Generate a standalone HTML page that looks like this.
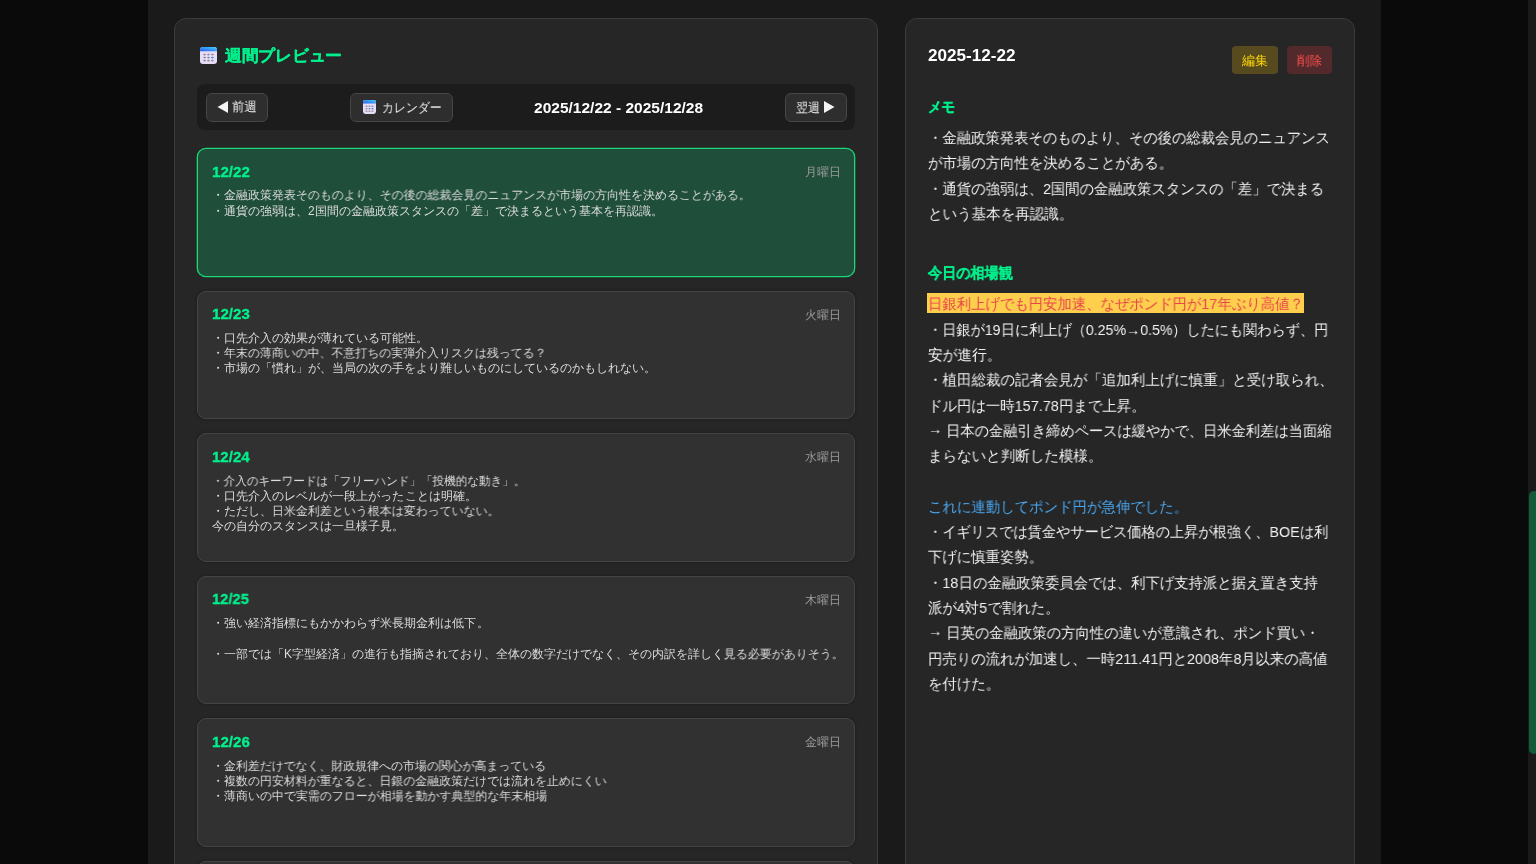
<!DOCTYPE html>
<html lang="ja">
<head>
<meta charset="utf-8">
<style>
*{box-sizing:border-box;margin:0;padding:0}
html,body{width:1536px;height:864px;overflow:hidden;background:#0a0a0a;font-family:"Liberation Sans",sans-serif;color:#e0e0e0}
.ab{position:absolute}
.l{position:absolute;white-space:nowrap;transform-origin:0 50%;will-change:transform}
.wrap{left:148px;top:0;width:1233px;height:864px;background:#1a1a1a}
.track{left:1528px;top:0;width:8px;height:864px;background:#1a1a1a}
.thumb{left:1528.5px;top:491px;width:10px;height:263px;background:#135c3b;border-radius:5px}
.panel{top:18px;height:900px;background:#262626;border:1px solid #3b3b3b;border-radius:12px}
.nav{left:197px;top:84px;width:658px;height:46.3px;background:#1c1c1c;border-radius:8px}
.btn{top:93px;height:29px;background:#2e2e2e;border:1px solid #464646;border-radius:6px}
.card{left:197px;width:658px;height:128.6px;background:#313131;border:1px solid #454545;border-radius:9px;box-shadow:0 0 3px rgba(0,0,0,.35)}
.card.on{background:#1f4e3a;border-color:#1bd878;box-shadow:0 0 0 0.3px #1bd878}
.sbtn{top:46px;height:28px;border-radius:4px}
</style>
</head>
<body>
<div class="ab wrap"></div>
<div class="ab track"></div>
<div class="ab thumb"></div>
<div class="ab panel" style="left:174px;width:704px"></div>
<div class="ab panel" style="left:905px;width:450px"></div>
<div class="ab nav"></div>
<div class="ab btn" style="left:206px;width:62px"></div>
<div class="ab btn" style="left:350px;width:103px"></div>
<div class="ab btn" style="left:785px;width:62px"></div>

<svg class="ab" style="left:200px;top:47px" width="17" height="17" viewBox="0 0 17 17" preserveAspectRatio="none">
<defs><linearGradient id="g3" x1="0" y1="1" x2="1" y2="0"><stop offset="0" stop-color="#2a5cf0"/><stop offset="1" stop-color="#3fd0fa"/></linearGradient></defs>
<rect x="0" y="0" width="17" height="17" rx="3" fill="#e6dcf6"/>
<path d="M3 0h11a3 3 0 0 1 3 3v1.2H0V3a3 3 0 0 1 3-3z" fill="url(#g3)"/>
<g fill="#8a8494"><ellipse cx="4.6" cy="7.6" rx="1.35" ry="0.8"/><ellipse cx="8.5" cy="7.6" rx="1.35" ry="0.8"/><ellipse cx="12.4" cy="7.6" rx="1.35" ry="0.8"/><ellipse cx="4.6" cy="10.6" rx="1.35" ry="0.8"/><ellipse cx="8.5" cy="10.6" rx="1.35" ry="0.8"/><ellipse cx="4.6" cy="13.6" rx="1.35" ry="0.8"/><ellipse cx="8.5" cy="13.6" rx="1.35" ry="0.8"/><ellipse cx="12.4" cy="13.6" rx="1.35" ry="0.8"/></g>
<ellipse cx="12.4" cy="10.6" rx="1.35" ry="0.8" fill="#1f8af2"/>
</svg>
<svg class="ab" style="left:363px;top:100px" width="13" height="14" viewBox="0 0 17 17" preserveAspectRatio="none">
<defs><linearGradient id="g4" x1="0" y1="1" x2="1" y2="0"><stop offset="0" stop-color="#2a5cf0"/><stop offset="1" stop-color="#3fd0fa"/></linearGradient></defs>
<rect x="0" y="0" width="17" height="17" rx="3" fill="#e6dcf6"/>
<path d="M3 0h11a3 3 0 0 1 3 3v1.2H0V3a3 3 0 0 1 3-3z" fill="url(#g4)"/>
<g fill="#8a8494"><ellipse cx="4.6" cy="7.6" rx="1.35" ry="0.8"/><ellipse cx="8.5" cy="7.6" rx="1.35" ry="0.8"/><ellipse cx="12.4" cy="7.6" rx="1.35" ry="0.8"/><ellipse cx="4.6" cy="10.6" rx="1.35" ry="0.8"/><ellipse cx="8.5" cy="10.6" rx="1.35" ry="0.8"/><ellipse cx="4.6" cy="13.6" rx="1.35" ry="0.8"/><ellipse cx="8.5" cy="13.6" rx="1.35" ry="0.8"/><ellipse cx="12.4" cy="13.6" rx="1.35" ry="0.8"/></g>
<ellipse cx="12.4" cy="10.6" rx="1.35" ry="0.8" fill="#1f8af2"/>
</svg>
<div class="ab card on" style="top:148.0px"></div>
<div class="ab card" style="top:290.6px"></div>
<div class="ab card" style="top:433.2px"></div>
<div class="ab card" style="top:575.8px"></div>
<div class="ab card" style="top:718.4px"></div>
<div class="ab card" style="top:861.0px"></div>
<div class="ab sbtn" style="left:1232px;width:46px;background:#564a1e"></div>
<div class="ab sbtn" style="left:1287px;width:45px;background:#532a2b"></div>
<div class="ab" style="left:927px;top:293px;width:377px;height:20px;background:#fdcf4c"></div>
<svg class="ab" style="left:216px;top:100px" width="13" height="14"><path d="M1.5 7 L12 1 L12 13 Z" fill="#f4f4f4"/></svg>
<svg class="ab" style="left:823px;top:100px" width="13" height="14"><path d="M11.5 7 L1 1 L1 13 Z" fill="#f4f4f4"/></svg>
<div class="l" id="m0" style="top:128.00px;font-size:15px;line-height:20px;color:#f0f0f0;left:928px;transform:scaleX(0.9567);">・金融政策発表そのものより、その後の総裁会見のニュアンス</div>
<div class="l" id="m1" style="top:153.30px;font-size:15px;line-height:20px;color:#f0f0f0;left:928px;transform:scaleX(0.9608);">が市場の方向性を決めることがある。</div>
<div class="l" id="m2" style="top:178.60px;font-size:15px;line-height:20px;color:#f0f0f0;left:928px;transform:scaleX(0.9591);">・通貨の強弱は、2国間の金融政策スタンスの「差」で決まる</div>
<div class="l" id="m3" style="top:203.90px;font-size:15px;line-height:20px;color:#f0f0f0;left:928px;transform:scaleX(0.9686);">という基本を再認識。</div>
<div class="l" id="p1" style="top:319.60px;font-size:15px;line-height:20px;color:#f0f0f0;left:928px;transform:scaleX(0.9464);">・日銀が19日に利上げ（0.25%→0.5%）したにも関わらず、円</div>
<div class="l" id="p2" style="top:344.90px;font-size:15px;line-height:20px;color:#f0f0f0;left:928px;transform:scaleX(0.9785);">安が進行。</div>
<div class="l" id="p3" style="top:370.20px;font-size:15px;line-height:20px;color:#f0f0f0;left:928px;transform:scaleX(0.9659);">・植田総裁の記者会見が「追加利上げに慎重」と受け取られ、</div>
<div class="l" id="p4" style="top:395.50px;font-size:15px;line-height:20px;color:#f0f0f0;left:928px;transform:scaleX(0.9630);">ドル円は一時157.78円まで上昇。</div>
<div class="l" id="p5" style="top:420.80px;font-size:15px;line-height:20px;color:#f0f0f0;left:928px;transform:scaleX(0.9517);"><span style="position:relative;top:-2px">→</span> 日本の金融引き締めペースは緩やかで、日米金利差は当面縮</div>
<div class="l" id="p6" style="top:446.10px;font-size:15px;line-height:20px;color:#f0f0f0;left:928px;transform:scaleX(0.9694);">まらないと判断した模様。</div>
<div class="l" id="p8" style="top:496.70px;font-size:15px;line-height:20px;color:#4aa6ee;left:928px;transform:scaleX(0.9631);">これに連動してポンド円が急伸でした。</div>
<div class="l" id="p9" style="top:522.00px;font-size:15px;line-height:20px;color:#f0f0f0;left:928px;transform:scaleX(0.9487);">・イギリスでは賃金やサービス価格の上昇が根強く、BOEは利</div>
<div class="l" id="p10" style="top:547.30px;font-size:15px;line-height:20px;color:#f0f0f0;left:928px;transform:scaleX(0.9591);">下げに慎重姿勢。</div>
<div class="l" id="p11" style="top:572.60px;font-size:15px;line-height:20px;color:#f0f0f0;left:928px;transform:scaleX(0.9580);">・18日の金融政策委員会では、利下げ支持派と据え置き支持</div>
<div class="l" id="p12" style="top:597.90px;font-size:15px;line-height:20px;color:#f0f0f0;left:928px;transform:scaleX(0.9598);">派が4対5で割れた。</div>
<div class="l" id="p13" style="top:623.20px;font-size:15px;line-height:20px;color:#f0f0f0;left:928px;transform:scaleX(0.9573);"><span style="position:relative;top:-2px">→</span> 日英の金融政策の方向性の違いが意識され、ポンド買い・</div>
<div class="l" id="p14" style="top:648.50px;font-size:15px;line-height:20px;color:#f0f0f0;left:928px;transform:scaleX(0.9601);">円売りの流れが加速し、一時211.41円と2008年8月以来の高値</div>
<div class="l" id="p15" style="top:673.80px;font-size:15px;line-height:20px;color:#f0f0f0;left:928px;transform:scaleX(0.9615);">を付けた。</div>
<div class="l" id="hm" style="top:97.00px;font-size:15px;line-height:20px;color:#00f08c;font-weight:bold;-webkit-text-stroke:0.25px #00f08c;left:928px;transform:scaleX(0.9000);">メモ</div>
<div class="l" id="hs" style="top:262.50px;font-size:15px;line-height:20px;color:#00f08c;font-weight:bold;-webkit-text-stroke:0.25px #00f08c;left:928px;transform:scaleX(0.9423);">今日の相場観</div>
<div class="l" id="rtitle" style="top:45.80px;font-size:17px;line-height:20px;color:#ffffff;font-weight:bold;left:928px;transform:scaleX(1.0069);">2025-12-22</div>
<div class="l" id="hl" style="top:293.50px;font-size:15px;line-height:20px;color:#e8444c;left:928px;transform:scaleX(0.9588);">日銀利上げでも円安加速、なぜポンド円が17年ぶり高値？</div>
<div class="l" id="title" style="top:46.00px;font-size:16px;line-height:20px;color:#00f08c;font-weight:bold;-webkit-text-stroke:0.25px #00f08c;left:225px;transform:scaleX(1.0450);">週間プレビュー</div>
<div class="l" id="range" style="top:97.70px;font-size:15px;line-height:20px;color:#ffffff;font-weight:bold;left:534px;transform:scaleX(1.0344);">2025/12/22 - 2025/12/28</div>
<div class="l" id="bprev" style="top:97.30px;font-size:13px;line-height:20px;color:#f0f0f0;left:232px;transform:scaleX(0.9480);">前週</div>
<div class="l" id="bcal" style="top:97.50px;font-size:13px;line-height:20px;color:#f0f0f0;left:381.5px;transform:scaleX(0.9178);">カレンダー</div>
<div class="l" id="bnext" style="top:97.50px;font-size:13px;line-height:20px;color:#f0f0f0;left:796px;transform:scaleX(0.9200);">翌週</div>
<div class="l" id="bedit" style="top:51.00px;font-size:13px;line-height:20px;color:#ffd60a;left:1241.5px;">編集</div>
<div class="l" id="bdel" style="top:51.00px;font-size:13px;line-height:20px;color:#ff4f4f;left:1296.5px;transform:scaleX(0.9647);">削除</div>
<div class="l" id="d0" style="top:161.50px;font-size:15px;line-height:20px;color:#00f08c;font-weight:bold;-webkit-text-stroke:0.3px #00f08c;left:212px;transform:scaleX(1.0081);">12/22</div>
<div class="l" id="w0" style="top:161.90px;font-size:12px;line-height:20px;color:#9a9a9a;right:695.0px;">月曜日</div>
<div class="l" id="c0_0" style="top:185.40px;font-size:12px;line-height:20px;color:#dcdcdc;left:212px;transform:scaleX(0.9976);">・金融政策発表そのものより、その後の総裁会見のニュアンスが市場の方向性を決めることがある。</div>
<div class="l" id="c0_1" style="top:200.60px;font-size:12px;line-height:20px;color:#dcdcdc;left:212px;transform:scaleX(0.9993);">・通貨の強弱は、2国間の金融政策スタンスの「差」で決まるという基本を再認識。</div>
<div class="l" id="d1" style="top:304.10px;font-size:15px;line-height:20px;color:#00f08c;font-weight:bold;-webkit-text-stroke:0.3px #00f08c;left:212px;transform:scaleX(1.0081);">12/23</div>
<div class="l" id="w1" style="top:304.50px;font-size:12px;line-height:20px;color:#9a9a9a;right:695.0px;">火曜日</div>
<div class="l" id="c1_0" style="top:328.00px;font-size:12px;line-height:20px;color:#dcdcdc;left:212px;">・口先介入の効果が薄れている可能性。</div>
<div class="l" id="c1_1" style="top:343.20px;font-size:12px;line-height:20px;color:#dcdcdc;left:212px;transform:scaleX(0.9955);">・年末の薄商いの中、不意打ちの実弾介入リスクは残ってる？</div>
<div class="l" id="c1_2" style="top:358.40px;font-size:12px;line-height:20px;color:#dcdcdc;left:212px;transform:scaleX(0.9993);">・市場の「慣れ」が、当局の次の手をより難しいものにしているのかもしれない。</div>
<div class="l" id="d2" style="top:446.70px;font-size:15px;line-height:20px;color:#00f08c;font-weight:bold;-webkit-text-stroke:0.3px #00f08c;left:212px;transform:scaleX(1.0026);">12/24</div>
<div class="l" id="w2" style="top:447.10px;font-size:12px;line-height:20px;color:#9a9a9a;right:695.0px;">水曜日</div>
<div class="l" id="c2_0" style="top:470.60px;font-size:12px;line-height:20px;color:#dcdcdc;left:212px;transform:scaleX(0.9671);">・介入のキーワードは「フリーハンド」「投機的な動き」。</div>
<div class="l" id="c2_1" style="top:485.80px;font-size:12px;line-height:20px;color:#dcdcdc;left:212px;transform:scaleX(1.0027);">・口先介入のレベルが一段上がったことは明確。</div>
<div class="l" id="c2_2" style="top:501.00px;font-size:12px;line-height:20px;color:#dcdcdc;left:212px;transform:scaleX(0.9982);">・ただし、日米金利差という根本は変わっていない。</div>
<div class="l" id="c2_3" style="top:516.20px;font-size:12px;line-height:20px;color:#dcdcdc;left:212px;transform:scaleX(1.0027);">今の自分のスタンスは一旦様子見。</div>
<div class="l" id="d3" style="top:589.30px;font-size:15px;line-height:20px;color:#00f08c;font-weight:bold;-webkit-text-stroke:0.3px #00f08c;left:212px;transform:scaleX(0.9816);">12/25</div>
<div class="l" id="w3" style="top:589.70px;font-size:12px;line-height:20px;color:#9a9a9a;right:695.0px;">木曜日</div>
<div class="l" id="c3_0" style="top:613.20px;font-size:12px;line-height:20px;color:#dcdcdc;left:212px;transform:scaleX(1.0019);">・強い経済指標にもかかわらず米長期金利は低下。</div>
<div class="l" id="c3_2" style="top:643.60px;font-size:12px;line-height:20px;color:#dcdcdc;left:212px;transform:scaleX(0.9995);">・一部では「K字型経済」の進行も指摘されており、全体の数字だけでなく、その内訳を詳しく見る必要がありそう。</div>
<div class="l" id="d4" style="top:731.90px;font-size:15px;line-height:20px;color:#00f08c;font-weight:bold;-webkit-text-stroke:0.3px #00f08c;left:212px;transform:scaleX(1.0081);">12/26</div>
<div class="l" id="w4" style="top:732.30px;font-size:12px;line-height:20px;color:#9a9a9a;right:695.0px;">金曜日</div>
<div class="l" id="c4_0" style="top:755.80px;font-size:12px;line-height:20px;color:#dcdcdc;left:212px;transform:scaleX(0.9943);">・金利差だけでなく、財政規律への市場の関心が高まっている</div>
<div class="l" id="c4_1" style="top:771.00px;font-size:12px;line-height:20px;color:#dcdcdc;left:212px;transform:scaleX(0.9965);">・複数の円安材料が重なると、日銀の金融政策だけでは流れを止めにくい</div>
<div class="l" id="c4_2" style="top:786.20px;font-size:12px;line-height:20px;color:#dcdcdc;left:212px;transform:scaleX(0.9976);">・薄商いの中で実需のフローが相場を動かす典型的な年末相場</div>
</body>
</html>
